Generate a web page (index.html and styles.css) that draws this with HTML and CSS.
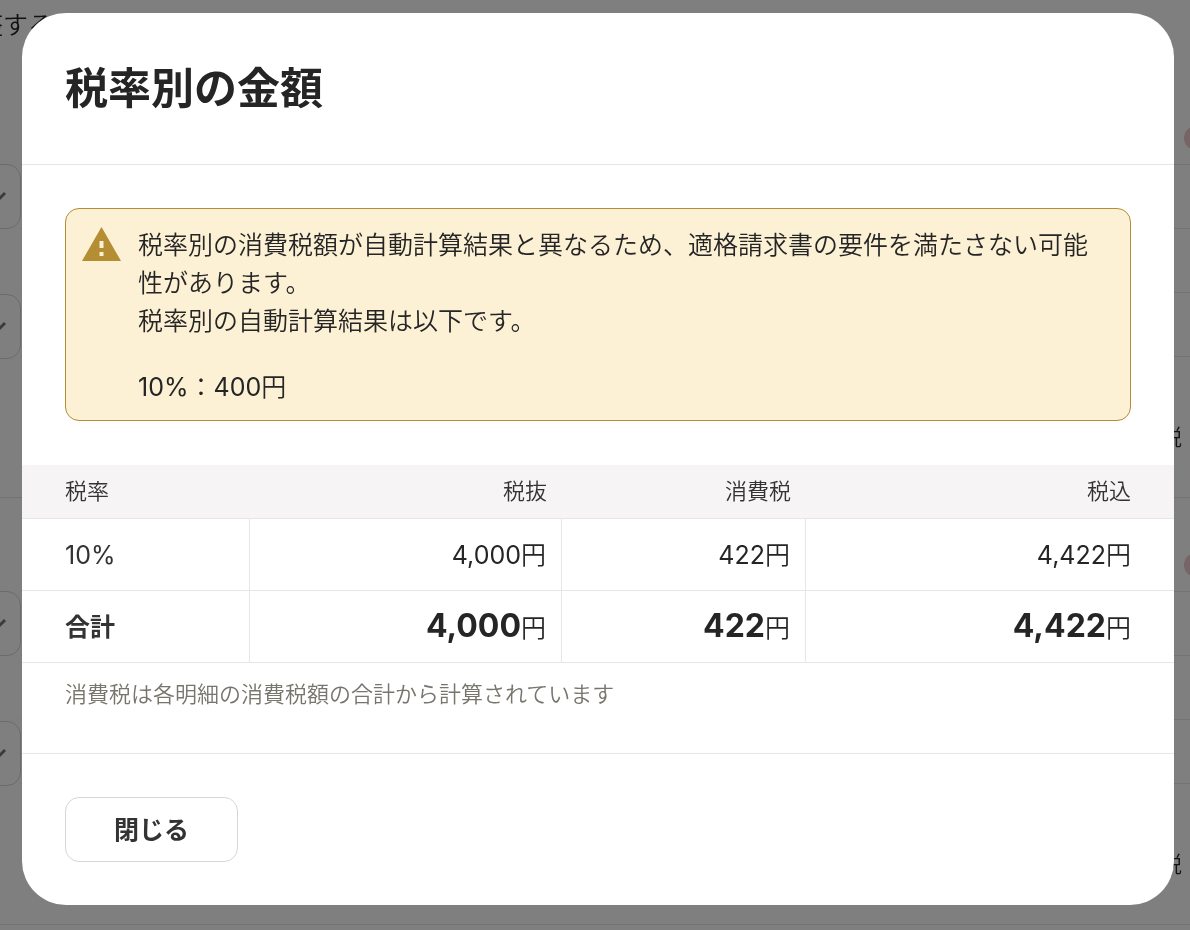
FILE: index.html
```
<!DOCTYPE html>
<html lang="ja">
<head>
    <meta charset="UTF-8">
    <meta name="viewport" content="width=device-width, initial-scale=1.0">
    <title>税率別の金額</title>
    <link rel="stylesheet" href="styles.css">
</head>
<body>
    <!-- Page behind the dialog -->
    <div class="page" aria-hidden="true" inert>
        <p class="page-lead">整する</p>

        <section class="entry">
            <div class="entry-fields">
                <div class="field">
                    <select class="field-select" aria-label="税率"></select>
                    <svg class="field-arrow" width="24" height="24" viewBox="0 0 24 24" fill="none" stroke="currentColor" stroke-width="3"><path d="M3 8l9 9 9-9"></path></svg>
                </div>
                <div class="field">
                    <select class="field-select" aria-label="税区分"></select>
                    <svg class="field-arrow" width="24" height="24" viewBox="0 0 24 24" fill="none" stroke="currentColor" stroke-width="3"><path d="M3 8l9 9 9-9"></path></svg>
                </div>
            </div>
            <div class="entry-detail">
                <div class="entry-head"><span class="entry-badge"></span></div>
                <div class="entry-row"></div>
                <div class="entry-row"></div>
                <div class="entry-row"></div>
                <div class="entry-total">税</div>
            </div>
        </section>

        <section class="entry">
            <div class="entry-fields">
                <div class="field">
                    <select class="field-select" aria-label="税率"></select>
                    <svg class="field-arrow" width="24" height="24" viewBox="0 0 24 24" fill="none" stroke="currentColor" stroke-width="3"><path d="M3 8l9 9 9-9"></path></svg>
                </div>
                <div class="field">
                    <select class="field-select" aria-label="税区分"></select>
                    <svg class="field-arrow" width="24" height="24" viewBox="0 0 24 24" fill="none" stroke="currentColor" stroke-width="3"><path d="M3 8l9 9 9-9"></path></svg>
                </div>
            </div>
            <div class="entry-detail">
                <div class="entry-head"><span class="entry-badge"></span></div>
                <div class="entry-row"></div>
                <div class="entry-row"></div>
                <div class="entry-row"></div>
                <div class="entry-total">税</div>
            </div>
        </section>
    </div>

    <div class="modal-overlay">
        <div class="modal" role="dialog" aria-modal="true" aria-labelledby="modal-title">
            <header class="modal-header">
                <h1 class="modal-title" id="modal-title">税率別の金額</h1>
            </header>

            <div class="modal-body">
                <div class="alert" role="alert">
                    <svg class="alert-icon" width="39" height="34" viewBox="0 0 39 34"><path fill="currentColor" fill-rule="evenodd" d="M19.500 0L39 34H0zM17.500 14v7h4v-7zM17.500 25v4h4v-4z"></path></svg>
                    <div class="alert-text">
                        <p>税率別の消費税額が自動計算結果と異なるため、適格請求書の要件を満たさない可能性があります。<br>税率別の自動計算結果は以下です。</p>
                        <p class="alert-amount">10%<span class="unit">：</span>400<span class="unit">円</span></p>
                    </div>
                </div>

                <table class="tax-table">
                    <thead>
                        <tr>
                            <th class="col-rate" scope="col">税率</th>
                            <th class="col-net" scope="col">税抜</th>
                            <th class="col-tax" scope="col">消費税</th>
                            <th scope="col">税込</th>
                        </tr>
                    </thead>
                    <tbody>
                        <tr>
                            <th scope="row">10%</th>
                            <td>4,000<span class="unit">円</span></td>
                            <td>422<span class="unit">円</span></td>
                            <td>4,422<span class="unit">円</span></td>
                        </tr>
                        <tr class="total-row">
                            <th scope="row">合計</th>
                            <td><strong>4,000</strong><span class="unit">円</span></td>
                            <td><strong>422</strong><span class="unit">円</span></td>
                            <td><strong>4,422</strong><span class="unit">円</span></td>
                        </tr>
                    </tbody>
                </table>
                <p class="table-note">消費税は各明細の消費税額の合計から計算されています</p>
            </div>

            <footer class="modal-footer">
                <button type="button" class="close-button">閉じる</button>
            </footer>
        </div>
    </div>
</body>
</html>
```
FILE: styles.css
```
:root {
    --text-primary: #252525;
    --text-secondary: #333333;
    --text-muted: #77756c;
    --border-subtle: #e6e6e6;
    --border-button: #d6d6d6;
    --warning: #b58d32;
    --warning-bg: #fcf0d5;
    --table-head-bg: #f6f4f5;

    --font-family-sans: Inter, 'Noto Sans CJK JP', sans-serif;
    --font-sm: 22px;
    --font-md: 25px;
    --font-lg: 32px;
    --font-xl: 43px;
    --spacing-sm: 15px;
    --spacing-lg: 43px;
}

*, *::before, *::after {
    box-sizing: border-box;
    margin: 0;
    padding: 0;
}

body {
    min-height: 100vh;
    overflow: hidden;
    font-family: var(--font-family-sans);
    font-size: var(--font-md);
    font-weight: 350;
    line-height: 38px;
    color: var(--text-primary);
    background: #ffffff;
}

/* Page behind the dialog */
.page {
    position: fixed;
    inset: 0 0 0 -22px;
    overflow: hidden;
}

.page-lead {
    padding: 6px 0 27px;
}

.entry {
    display: flex;
    height: 427px;
    border-bottom: 1px solid var(--border-subtle);
}

.entry-fields {
    display: flex;
    flex-direction: column;
    gap: 65px;
    padding-top: 93px;
}

.field {
    position: relative;
}

.field-select {
    display: block;
    width: 43px;
    height: 65px;
    border: 1px solid var(--border-button);
    border-radius: 14px;
    background: transparent;
    appearance: none;
}

.field-arrow {
    position: absolute;
    top: 21px;
    right: 13px;
    color: #777777;
}

.entry-detail {
    flex: 1;
}

.entry-head {
    display: flex;
    justify-content: flex-end;
    height: 94px;
    padding-top: 55px;
    border-bottom: 1px solid var(--border-subtle);
}

.entry-badge {
    width: 24px;
    height: 24px;
    margin-right: -18px;
    border-radius: 50%;
    background: #eec8cc;
}

.entry-row {
    height: 64px;
    border-bottom: 1px solid var(--border-subtle);
}

.entry-total {
    padding: 61px 8px 0 0;
    font-size: var(--font-sm);
    text-align: right;
}

/* Dialog */
.modal-overlay {
    position: fixed;
    inset: 0;
    padding: 13px 16px 25px 22px;
    background: rgba(0, 0, 0, 0.5);
}

.modal {
    overflow: hidden;
    border-radius: 44px;
    background: #ffffff;
}

.modal-header {
    padding: var(--spacing-lg);
    border-bottom: 1px solid var(--border-subtle);
}

.modal-title {
    font-size: var(--font-xl);
    font-weight: 700;
    line-height: 65px;
}

.modal-body {
    padding: var(--spacing-lg) 0;
}

.alert {
    display: flex;
    gap: 17px;
    margin: 0 var(--spacing-lg) 44px;
    padding: 17px 16px 14px;
    border: 1px solid var(--warning);
    border-radius: 14px;
    background: var(--warning-bg);
}

.alert-icon {
    flex: none;
    margin-top: 1px;
    color: var(--warning);
}

.alert-text {
    display: flex;
    flex-direction: column;
    gap: 28px;
    padding-right: 8px;
}

.alert-amount {
    font-weight: 400;
}

.unit {
    font-weight: 350;
}

.tax-table {
    width: 100%;
    border-spacing: 0;
    table-layout: fixed;
}

.tax-table th,
.tax-table td {
    padding: 0 var(--spacing-sm);
    border-bottom: 1px solid var(--border-subtle);
    font-weight: 400;
    text-align: right;
}

.tax-table th:first-child {
    padding-left: var(--spacing-lg);
    text-align: left;
    color: var(--text-secondary);
}

.tax-table th:last-child,
.tax-table td:last-child {
    padding-right: var(--spacing-lg);
}

.tax-table thead th {
    height: 54px;
    padding-bottom: 2px;
    font-size: var(--font-sm);
    font-weight: 350;
    color: var(--text-secondary);
    background: var(--table-head-bg);
}

.tax-table tbody th,
.tax-table tbody td {
    height: 72px;
}

.tax-table tbody th,
.tax-table tbody td:not(:last-child) {
    border-right: 1px solid var(--border-subtle);
}

.col-rate {
    width: 228px;
}

.col-net {
    width: 312px;
}

.col-tax {
    width: 244px;
}

.tax-table .total-row th {
    font-weight: 700;
}

.total-row strong {
    font-size: var(--font-lg);
    font-weight: 700;
}

.table-note {
    padding: var(--spacing-sm) var(--spacing-lg) 0;
    font-size: var(--font-sm);
    line-height: 32px;
    color: var(--text-muted);
}

.modal-footer {
    padding: var(--spacing-lg);
    border-top: 1px solid var(--border-subtle);
}

.close-button {
    height: 65px;
    padding: 0 48px 4px;
    border: 1px solid var(--border-button);
    border-radius: 14px;
    font-family: inherit;
    font-size: var(--font-md);
    font-weight: 700;
    color: var(--text-secondary);
    background: #ffffff;
    cursor: pointer;
}
```
